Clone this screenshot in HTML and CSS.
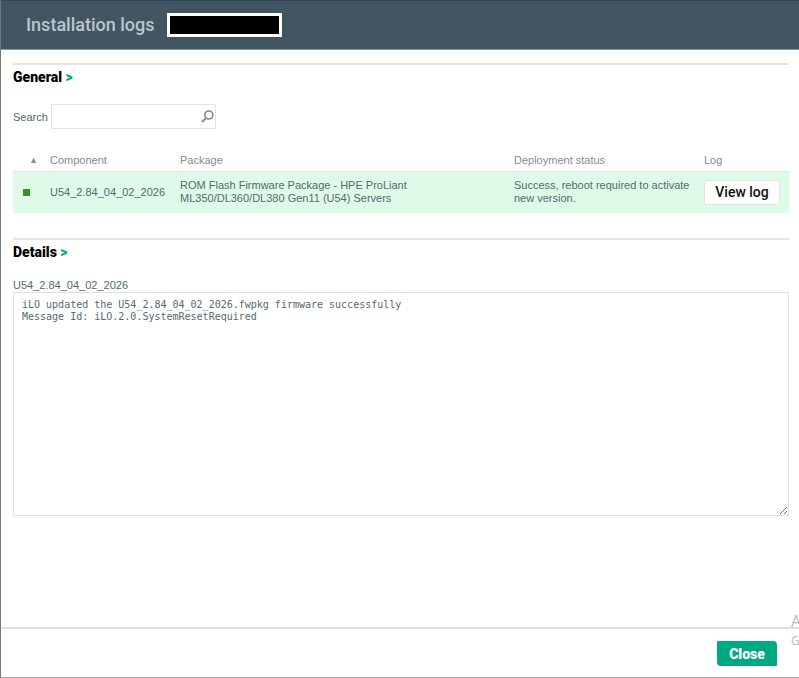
FILE: index.html
```html
<!DOCTYPE html>
<html lang="en">
<head>
  <meta charset="UTF-8">
  <meta name="viewport" content="width=device-width, initial-scale=1">
  <title>Installation logs</title>
  <link rel="stylesheet" href="styles.css">
</head>
<body>
  <div class="dialog">
    <header class="dialog-header">
      <h1>Installation logs</h1>
      <span class="redacted"></span>
    </header>

    <main class="dialog-body">
      <section class="general">
        <h2>General <span class="arrow">&gt;</span></h2>

        <div class="search">
          <label for="search">Search</label>
          <div class="search-box">
            <input type="text" id="search">
            <svg class="search-icon" width="13" height="13" viewBox="0 0 13 13">
              <circle cx="7.8" cy="5" r="4" fill="none" stroke="#858585" stroke-width="1.6"/>
              <path d="M5 8L1 12" stroke="#858585" stroke-width="1.8"/>
            </svg>
          </div>
        </div>

        <table class="logs">
          <thead>
            <tr>
              <th class="col-state">▲</th>
              <th class="col-component">Component</th>
              <th class="col-package">Package</th>
              <th class="col-status">Deployment status</th>
              <th class="col-log">Log</th>
            </tr>
          </thead>
          <tbody>
            <tr>
              <td><span class="state-ok"></span></td>
              <td>U54_2.84_04_02_2026</td>
              <td class="package">ROM Flash Firmware Package - HPE ProLiant ML350/DL360/DL380 Gen11 (U54) Servers</td>
              <td>Success, reboot required to activate new version.</td>
              <td class="log"><button type="button" class="view-log">View log</button></td>
            </tr>
          </tbody>
        </table>
      </section>

      <section class="details">
        <h2>Details <span class="arrow">&gt;</span></h2>
        <label for="log-text">U54_2.84_04_02_2026</label>
        <textarea id="log-text" readonly spellcheck="false">iLO updated the U54_2.84_04_02_2026.fwpkg firmware successfully
Message Id: iLO.2.0.SystemResetRequired</textarea>
      </section>
    </main>

    <footer class="dialog-footer">
      <button type="button" class="close">Close</button>
    </footer>

    <div class="watermark">
      <div class="watermark-title">A</div>
      <div>G</div>
    </div>
  </div>
</body>
</html>
```

FILE: styles.css
```css
* {
  box-sizing: border-box;
}

body {
  margin: 0;
  font-family: "Liberation Sans", Arial, sans-serif;
  font-size: 11px;
  color: #536b70;
  background: #fff;
}

.dialog {
  position: relative;
  display: flex;
  flex-direction: column;
  min-height: 100vh;
  overflow: hidden;
  border-left: 1px solid #777;
  border-bottom: 1px solid #aaa;
}

.dialog-header {
  display: flex;
  align-items: center;
  gap: 12px;
  height: 50px;
  padding: 0 25px;
  background: #425563;
  border-top: 1px solid #34434f;
  border-bottom: 1px solid #8a959e;
}

h1 {
  margin: 0;
  font-family: Roboto, sans-serif;
  font-size: 18px;
  font-weight: 500;
  line-height: 24px;
  color: #bcc5cb;
}

.redacted {
  width: 115px;
  height: 24px;
  background: #000;
  border: 3px solid #fff;
}

.dialog-body {
  flex: 1;
  padding: 13px 10px 0 12px;
}

section {
  border-top: 2px solid #e5e5e9;
}

h2 {
  margin: 0;
  font-family: Roboto, sans-serif;
  font-size: 14px;
  font-weight: 900;
  line-height: 24px;
  color: #000;
}

.arrow {
  color: #01a982;
}

.search {
  display: flex;
  align-items: center;
  gap: 3px;
  margin-top: 15px;
}

.search-box {
  position: relative;
}

.search input {
  display: block;
  width: 165px;
  height: 25px;
  padding: 0 24px 0 6px;
  font: inherit;
  color: inherit;
  border: 1px solid #e0e4e4;
}

.search-icon {
  position: absolute;
  top: 6px;
  right: 2px;
}

.logs {
  width: 100%;
  margin-top: 21px;
  table-layout: fixed;
  border-collapse: collapse;
}

.logs th {
  height: 21px;
  padding: 0;
  font-weight: normal;
  text-align: left;
  color: #8a8a8a;
  border-bottom: 1px dotted #ccdcd2;
}

.logs td {
  height: 42px;
  padding: 0;
  line-height: 13px;
  background: #dffae9;
}

.logs .col-state {
  width: 37px;
  padding-left: 16px;
  font-size: 9px;
}

.col-component {
  width: 130px;
}

.col-status {
  width: 190px;
}

.col-log {
  width: 85px;
}

.logs .package {
  padding-right: 90px;
}

.state-ok {
  display: block;
  width: 7px;
  height: 7px;
  margin-left: 10px;
  background: #38961f;
}

button {
  font-family: Roboto, sans-serif;
  cursor: pointer;
}

.view-log {
  display: block;
  width: 76px;
  height: 25px;
  padding: 0;
  font-size: 14px;
  font-weight: 500;
  color: #111;
  background: #fff;
  border: 1px solid #dde5e0;
  border-radius: 2px;
}

.details {
  margin-top: 25px;
}

.details label {
  display: block;
  margin-top: 15px;
  line-height: 13px;
}

.details textarea {
  display: block;
  width: 100%;
  height: 224px;
  padding: 6px 8px;
  font-family: "DejaVu Sans Mono", monospace;
  font-size: 10px;
  line-height: 12px;
  color: #536b70;
  background: #fff;
  border: 1px solid #e0e0e0;
}

.dialog-footer {
  display: flex;
  justify-content: flex-end;
  padding: 12px 22px 11px;
  border-top: 2px solid #dfdfdf;
}

.close {
  width: 60px;
  height: 25px;
  padding: 0;
  font-size: 14px;
  font-weight: 900;
  color: #fff;
  background: #01a982;
  border: 0;
  border-radius: 1px 4px 1px 4px;
}

/* runs past the right edge of the window */
.watermark {
  position: absolute;
  right: -2px;
  bottom: 26px;
  font-family: "Open Sans", sans-serif;
  font-size: 12px;
  line-height: 20px;
  color: #bbb;
}

.watermark-title {
  font-size: 16px;
}
```
